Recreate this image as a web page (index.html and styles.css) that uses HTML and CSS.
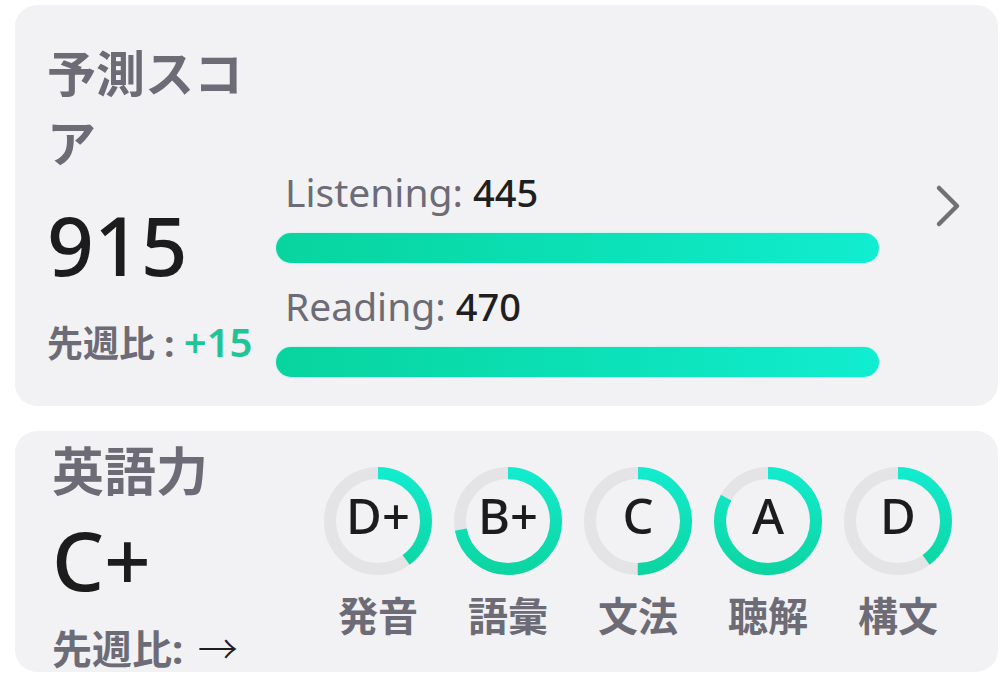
FILE: index.html
```html
<!DOCTYPE html>
<html lang="ja">
<head>
	<meta charset="UTF-8">
	<title>予測スコア</title>
<link rel="stylesheet" href="styles.css">
</head>
<body>
	<svg class="defs" width="0" height="0">
		<defs>
			<!-- 円は-90度回転するので x 方向で上→下の色になる -->
			<linearGradient id="arcGrad" gradientUnits="userSpaceOnUse" x1="108" y1="0" x2="0" y2="0">
				<stop offset="0" stop-color="#13ecd0"/>
				<stop offset="1" stop-color="#0cd49f"/>
			</linearGradient>
		</defs>
	</svg>

	<div class='page'>
		<section class='card score'>
			<div class='score-main'>
				<h2 class='card-title'>予測スコア</h2>
				<div class='big-num'>915</div>
				<div class='delta'>先週比 : <span class='up'>+15</span></div>
			</div>
			<div class='score-parts'>
				<div class='part-label'>Listening: <b>445</b></div>
				<div class='bar'></div>
				<div class='part-label'>Reading: <b>470</b></div>
				<div class='bar'></div>
			</div>
			<div class='more'>
				<svg width="26" height="44" viewBox="0 0 26 44"><path d="M4 4 L22 22 L4 40" fill="none" stroke="#717171" stroke-width="4.5" stroke-linecap="round" stroke-linejoin="round"/></svg>
			</div>
		</section>

		<section class='card level'>
			<div class='level-main'>
				<h2 class='card-title'>英語力</h2>
				<div class='big-num'>C+</div>
				<div class='delta'>先週比: <span class='arrow'>→</span></div>
			</div>
			<div class='skills'>
				<div class='skill'>
					<div class='ring'>
						<svg viewBox="0 0 108 108"><circle class="track" cx="54" cy="54" r="48"/><circle class="arc" cx="54" cy="54" r="48" stroke-dasharray="120.6 301.6" transform="rotate(-90 54 54)"/></svg>
						<span class='grade'>D+</span>
					</div>
					<div class='skill-name'>発音</div>
				</div>
				<div class='skill'>
					<div class='ring'>
						<svg viewBox="0 0 108 108"><circle class="track" cx="54" cy="54" r="48"/><circle class="arc" cx="54" cy="54" r="48" stroke-dasharray="217.1 301.6" transform="rotate(-90 54 54)"/></svg>
						<span class='grade'>B+</span>
					</div>
					<div class='skill-name'>語彙</div>
				</div>
				<div class='skill'>
					<div class='ring'>
						<svg viewBox="0 0 108 108"><circle class="track" cx="54" cy="54" r="48"/><circle class="arc" cx="54" cy="54" r="48" stroke-dasharray="150.8 301.6" transform="rotate(-90 54 54)"/></svg>
						<span class='grade'>C</span>
					</div>
					<div class='skill-name'>文法</div>
				</div>
				<div class='skill'>
					<div class='ring'>
						<svg viewBox="0 0 108 108"><circle class="track" cx="54" cy="54" r="48"/><circle class="arc" cx="54" cy="54" r="48" stroke-dasharray="250.3 301.6" transform="rotate(-90 54 54)"/></svg>
						<span class='grade'>A</span>
					</div>
					<div class='skill-name'>聴解</div>
				</div>
				<div class='skill'>
					<div class='ring'>
						<svg viewBox="0 0 108 108"><circle class="track" cx="54" cy="54" r="48"/><circle class="arc" cx="54" cy="54" r="48" stroke-dasharray="120.6 301.6" transform="rotate(-90 54 54)"/></svg>
						<span class='grade'>D</span>
					</div>
					<div class='skill-name'>構文</div>
				</div>
			</div>
		</section>
	</div>
</body>
</html>
```

FILE: styles.css
```css
body{
	margin:0;
	background:#fff;
	font-family:"Noto Sans","Noto Sans CJK JP",sans-serif;
	color:#1f1f1f;
}
.defs{
	position:absolute;
	width:0;height:0;
}
.page{
	display:flex;
	flex-direction:column;
	gap:25px;
	padding:5px 9px 0 15px;
}
.card{
	display:flex;
	background:#f2f2f4;
	border-radius:22px;
}
.card-title{
	margin:0;
	font-weight:700;
	color:#6d6c76;
}
.big-num{
	font-size:82px;
	line-height:90px;
	font-weight:500;
	color:#1c1c1c;
}
.delta{
	font-weight:700;
	color:#6d6c76;
}

/* 予測スコア */
.score{
	height:401px;
	box-sizing:border-box;
	padding:33px 0 29px 32px;
}
.score-main{
	width:229px;
	flex:none;
}
.score .card-title{
	font-size:49px;
	line-height:70px;
}
.score .big-num{
	margin-top:21px;
}
.score .delta{
	margin-top:29px;
	font-size:36px;
	line-height:48px;
}
.up{
	font-size:40px;
	color:#1fc596;
	font-weight:600;
}
.score-parts{
	width:603px;
	flex:none;
	display:flex;
	flex-direction:column;
	justify-content:flex-end;
}
.part-label{
	padding-left:9px;
	margin-bottom:15px;
	font-size:39px;
	line-height:51px;
	color:#6d6c76;
}
.part-label b{
	font-size:38px;
	font-weight:500;
	color:#1f1f1f;
}
.bar{
	height:30px;
	border-radius:15px;
	background:linear-gradient(90deg,#08d49e,#0be0b5 50%,#11edd0);
	box-shadow:0 0 2px rgba(40,240,220,.45);
}
.bar + .part-label{
	margin-top:17px;
}
.more{
	display:flex;
	align-items:center;
	margin-left:56px;
	margin-top:-4px;
}

/* 英語力 */
.level{
	height:241px;
	box-sizing:border-box;
	padding:10px 0 0 37px;
}
.level-main{
	width:272px;
	flex:none;
}
.level .card-title{
	font-size:52px;
	line-height:60px;
}
.level .big-num{
	margin-top:13px;
}
.level .delta{
	margin-top:19px;
	font-size:40px;
	line-height:48px;
}
.arrow{
	margin-left:4px;
	font-family:"Noto Sans CJK JP",sans-serif;
	font-weight:300;
	color:#1f1f1f;
}
.skills{
	display:flex;
	gap:22px;
	padding-top:26px;
}
.skill{
	width:108px;
	display:flex;
	flex-direction:column;
	align-items:center;
}
.ring{
	display:grid;
	width:108px;height:108px;
}
.ring svg,.ring .grade{
	grid-area:1/1;
}
.ring svg{
	width:108px;height:108px;
}
.track{
	fill:none;
	stroke:#e4e4e6;
	stroke-width:12;
}
.arc{
	fill:none;
	stroke:url(#arcGrad);
	stroke-width:12;
}
.grade{
	display:flex;
	align-items:center;
	justify-content:center;
	padding-bottom:13px;
	font-size:49px;
	font-weight:500;
	color:#1c1c1c;
}
.skill-name{
	margin-top:17px;
	font-size:40px;
	line-height:48px;
	font-weight:700;
	color:#6d6c76;
	white-space:nowrap;
}
```
